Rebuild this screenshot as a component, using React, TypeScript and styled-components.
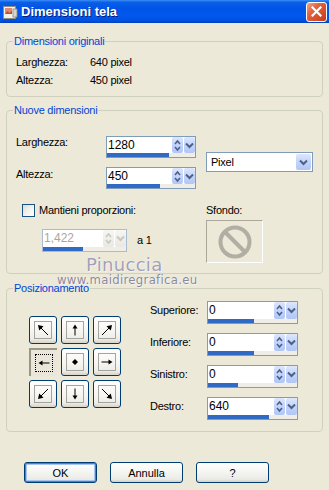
import styled, { createGlobalStyle } from "styled-components";

const GlobalStyle = createGlobalStyle`
  html, body { margin: 0; padding: 0; background: #ECE9D8; }
  body { font-family: "Liberation Sans", Arial, sans-serif; font-size: 11px; color: #000; }
  * { box-sizing: border-box; }
`;

const Window = styled.div`
  position: relative;
  width: 329px;
  height: 490px;
  overflow: hidden;
  background: #ECE9D8;
  letter-spacing: -0.25px;
`;

const TitleBar = styled.div`
  height: 23px;
  display: flex;
  align-items: center;
  padding: 0 2px;
  background: linear-gradient(180deg, #3C8DF7 0%, #0A5FE6 10%, #0155E6 35%, #0058EE 70%, #0050DC 90%, #0041BE 100%);
`;

const Title = styled.div`
  margin-left: 3px;
  color: #fff;
  font-weight: bold;
  font-size: 13px;
  letter-spacing: 0;
  text-shadow: 1px 1px 0 #0A1E7D;
`;

const CloseBtn = styled.div`
  margin-left: auto;
  width: 21px;
  height: 20px;
  border: 1px solid #fff;
  border-radius: 3px;
  background: linear-gradient(135deg, #F0A88E 0%, #E2643F 35%, #D44A23 75%, #C23A16 100%);
  display: flex;
  align-items: center;
  justify-content: center;
`;

const Body = styled.div`
  padding: 12px 6px 0;
`;

const Group = styled.fieldset<{ $pad: string; $gap?: number }>`
  margin: ${(p) => p.$gap ?? 0}px 0 0;
  padding: ${(p) => p.$pad};
  border: 1px solid #D0D0BF;
  border-radius: 4px;
  min-width: 0;
`;

const Legend = styled.legend`
  margin-left: -3px;
  padding: 0 1px;
  color: #0046D5;
  line-height: 13px;
`;

const InfoGrid = styled.div`
  display: grid;
  grid-template-columns: 74px auto;
  grid-auto-rows: 18px;
  align-items: center;
`;

const Label = styled.div<{ $w?: number; $top?: number }>`
  width: ${(p) => (p.$w ? `${p.$w}px` : "auto")};
  padding-top: ${(p) => p.$top ?? 0}px;
  line-height: 13px;
  flex-shrink: 0;
`;

const Upper = styled.div`
  display: flex;
`;

const SizeRows = styled.div`
  display: flex;
  flex-direction: column;
  gap: 9px;
`;

const Row = styled.div`
  display: flex;
  align-items: flex-start;
`;

const SpinBox = styled.div<{ $w: number; $h: number; $off?: boolean }>`
  width: ${(p) => p.$w}px;
  height: ${(p) => p.$h}px;
  border: 1px solid ${(p) => (p.$off ? "#A9BAD2" : "#7F9DB9")};
  background: #fff;
  display: flex;
  flex-direction: column;
  flex-shrink: 0;
`;

const SpinTop = styled.div`
  flex: 1;
  display: flex;
  min-height: 0;
`;

const SpinValue = styled.div<{ $off?: boolean }>`
  flex: 1;
  padding-left: 1px;
  font-size: 12px;
  letter-spacing: 0;
  line-height: 16px;
  color: ${(p) => (p.$off ? "#ACA899" : "#000")};
`;

const SpinBtn = styled.div<{ $off?: boolean }>`
  width: 11px;
  margin-left: 1px;
  border-radius: 2px;
  background: ${(p) =>
    p.$off ? "linear-gradient(180deg, #F6F6F2, #E9E8E2)" : "linear-gradient(180deg, #DCE6FD 0%, #C3D4FB 50%, #B1C6F6 100%)"};
  display: flex;
  align-items: center;
  justify-content: center;
`;

const SpinTrack = styled.div`
  height: 4px;
  background: #EFEDE5;
`;

const SpinFill = styled.div<{ $fill: number }>`
  width: ${(p) => p.$fill}px;
  height: 100%;
  background: #316AC5;
`;

const Select = styled.div`
  align-self: center;
  margin: 0 0 1px 10px;
  width: 107px;
  height: 20px;
  border: 1px solid #7F9DB9;
  background: #fff;
  display: flex;
  padding: 1px;
`;

const SelectText = styled.div`
  flex: 1;
  padding-left: 3px;
  line-height: 16px;
`;

const SelectBtn = styled.div`
  width: 15px;
  border-radius: 2px;
  background: linear-gradient(180deg, #DCE6FD 0%, #C3D4FB 50%, #B1C6F6 100%);
  display: flex;
  align-items: center;
  justify-content: center;
`;

const Lower = styled.div`
  display: flex;
  margin-top: 15px;
`;

const LeftCol = styled.div`
  width: 190px;
  display: flex;
  flex-direction: column;
`;

const CheckRow = styled.div`
  display: flex;
  align-items: center;
  gap: 4px;
  margin-left: 6px;
  line-height: 13px;
`;

const Check = styled.div`
  width: 13px;
  height: 13px;
  border: 1px solid #1C5180;
  background: linear-gradient(135deg, #DCDCD7 0%, #F5F5F2 60%, #FFFFFF 100%);
`;

const RatioRow = styled.div`
  display: flex;
  align-items: center;
  gap: 10px;
  margin: 12px 0 0 26px;
  line-height: 13px;
`;

const RightCol = styled.div`
  display: flex;
  flex-direction: column;
  gap: 3px;
`;

const Swatch = styled.div`
  width: 57px;
  height: 43px;
  border: 1px solid;
  border-color: #ACA899 #FFFFFF #FFFFFF #ACA899;
  display: flex;
  align-items: center;
  justify-content: center;
`;

const PosBody = styled.div`
  display: flex;
  align-items: flex-start;
`;

const PadGrid = styled.div`
  display: grid;
  grid-template-columns: repeat(3, 28px);
  grid-auto-rows: 28px;
  gap: 4px;
  margin: 15px 0 0 13px;
`;

const PadBtn = styled.div<{ $pressed?: boolean }>`
  display: flex;
  align-items: center;
  justify-content: center;
  ${(p) =>
    p.$pressed
      ? `
    border-top: 2px solid #9A9788;
    border-left: 2px solid #9A9788;
    background: #EAE7DA;
  `
      : `
    border: 1px solid #003C74;
    border-radius: 3px;
    background: linear-gradient(180deg, #FFFFFF 0%, #F6F5F1 55%, #ECEBE5 85%, #D8D3C8 100%);
  `}
`;

const PadFrame = styled.div<{ $pressed?: boolean }>`
  width: 18px;
  height: 18px;
  border: 1px ${(p) => (p.$pressed ? "dotted #000" : "solid #A3A3A0")};
  display: flex;
  align-items: center;
  justify-content: center;
`;

const MarginCol = styled.div`
  margin-left: 29px;
  display: flex;
  flex-direction: column;
  gap: 9px;
`;

const Buttons = styled.div`
  display: flex;
  gap: 13px;
  margin-top: 30px;
  padding-left: 18px;
`;

const Button = styled.div<{ $default?: boolean }>`
  width: 73px;
  height: 21px;
  border: 1px solid #003C74;
  border-radius: 3px;
  background: linear-gradient(180deg, #FFFFFF 0%, #F4F4F0 50%, #ECEBE6 85%, #D6D0C5 100%);
  box-shadow: ${(p) => (p.$default ? "inset 0 0 0 1px #4F7FCB, inset 0 0 0 2px #A9C5F2" : "none")};
  display: flex;
  align-items: center;
  justify-content: center;
  letter-spacing: 0;
`;

const Watermark = styled.div<{ $top: number; $left: number; $size: number; $color: string }>`
  position: absolute;
  top: ${(p) => p.$top}px;
  left: ${(p) => p.$left}px;
  font-family: "DejaVu Sans", sans-serif;
  font-size: ${(p) => p.$size}px;
  line-height: 1;
  letter-spacing: 0.3px;
  color: ${(p) => p.$color};
  text-shadow: 0 0 1px #fff, 1px 1px 0 #F4F2EA;
  pointer-events: none;
`;

const UpDown = ({ off }: { off?: boolean }) => (
  <svg width="7" height="13" viewBox="0 0 7 13">
    <path d="M1 5 L3.5 2 L6 5 M1 8 L3.5 11 L6 8" fill="none" stroke={off ? "#C9C8BF" : "#4D6185"} strokeWidth="1.6" />
  </svg>
);

const Chevron = ({ off }: { off?: boolean }) => (
  <svg width="9" height="7" viewBox="0 0 9 7">
    <path d="M1 1.5 L4.5 5 L8 1.5" fill="none" stroke={off ? "#C9C8BF" : "#4D6185"} strokeWidth="2" />
  </svg>
);

type SpinProps = { value: string; fill: number; w: number; h?: number; off?: boolean };

const Spin = ({ value, fill, w, h = 22, off }: SpinProps) => (
  <SpinBox $w={w} $h={h} $off={off}>
    <SpinTop>
      <SpinValue $off={off}>{value}</SpinValue>
      <SpinBtn $off={off}>
        <UpDown off={off} />
      </SpinBtn>
      <SpinBtn $off={off}>
        <Chevron off={off} />
      </SpinBtn>
    </SpinTop>
    <SpinTrack>
      <SpinFill $fill={fill} />
    </SpinTrack>
  </SpinBox>
);

const pads = [
  { d: true, r: 0 },
  { d: false, r: 0 },
  { d: true, r: 90 },
  { d: false, r: 270 },
  { c: true, r: 0 },
  { d: false, r: 90 },
  { d: true, r: 270 },
  { d: false, r: 180 },
  { d: true, r: 180 },
];

const Arrow = ({ d, r, c }: { d?: boolean; r: number; c?: boolean }) => (
  <svg width="14" height="14" viewBox="0 0 14 14">
    {c ? (
      <path d="M7 4 L10 7 L7 10 L4 7 Z" fill="#000" />
    ) : (
      <g transform={`rotate(${r} 7 7)`}>
        {d ? (
          <>
            <path d="M12 12 L3.5 3.5" stroke="#000" strokeWidth="1" />
            <path d="M2 2 L7.5 3.2 L3.2 7.5 Z" fill="#000" />
          </>
        ) : (
          <>
            <path d="M7 12.5 L7 4" stroke="#000" strokeWidth="1" />
            <path d="M7 1.5 L4.5 5.5 L9.5 5.5 Z" fill="#000" />
          </>
        )}
      </g>
    )}
  </svg>
);

const margins = [
  { label: "Superiore:", value: "0", fill: 46 },
  { label: "Inferiore:", value: "0", fill: 46 },
  { label: "Sinistro:", value: "0", fill: 30 },
  { label: "Destro:", value: "640", fill: 61 },
];

export default function App() {
  return (
    <Window>
      <GlobalStyle />
      <TitleBar>
        <svg width="16" height="16" viewBox="0 0 16 16">
          <rect x="1.5" y="2.5" width="12" height="12" fill="#F4F1E8" stroke="#8E8C84" />
          <rect x="3" y="4" width="7" height="6" fill="#E6896A" />
          <path d="M3 10 L5.5 7 L7.5 9 L10 6.5 L10 10 Z" fill="#B2543A" />
          <rect x="11" y="5" width="4" height="8" fill="#D9D6CC" stroke="#8E8C84" strokeWidth="0.8" />
        </svg>
        <Title>Dimensioni tela</Title>
        <CloseBtn>
          <svg width="11" height="11" viewBox="0 0 11 11">
            <path d="M1.5 1.5 L9.5 9.5 M9.5 1.5 L1.5 9.5" stroke="#fff" strokeWidth="2.2" strokeLinecap="square" />
          </svg>
        </CloseBtn>
      </TitleBar>

      <Body>
        <Group $pad="5px 9px 7px">
          <Legend>Dimensioni originali</Legend>
          <InfoGrid>
            <span>Larghezza:</span>
            <span>640 pixel</span>
            <span>Altezza:</span>
            <span>450 pixel</span>
          </InfoGrid>
        </Group>

        <Group $pad="19px 9px 10px" $gap={7}>
          <Legend>Nuove dimensioni</Legend>
          <Upper>
            <SizeRows>
              <Row>
                <Label $w={90}>Larghezza:</Label>
                <Spin value="1280" fill={62} w={90} />
              </Row>
              <Row>
                <Label $w={90} $top={1}>Altezza:</Label>
                <Spin value="450" fill={53} w={90} />
              </Row>
            </SizeRows>
            <Select>
              <SelectText>Pixel</SelectText>
              <SelectBtn>
                <Chevron />
              </SelectBtn>
            </Select>
          </Upper>
          <Lower>
            <LeftCol>
              <CheckRow>
                <Check />
                <span>Mantieni proporzioni:</span>
              </CheckRow>
              <RatioRow>
                <Spin value="1,422" fill={40} w={85} h={23} off />
                <span>a 1</span>
              </RatioRow>
            </LeftCol>
            <RightCol>
              <Label>Sfondo:</Label>
              <Swatch>
                <svg width="36" height="36" viewBox="0 0 36 36">
                  <circle cx="18" cy="18" r="14.5" fill="none" stroke="#B1AFA4" strokeWidth="4" />
                  <path d="M8 8 L28 28" stroke="#B1AFA4" strokeWidth="4" />
                </svg>
              </Swatch>
            </RightCol>
          </Lower>
        </Group>

        <Group $pad="6px 9px 11px" $gap={8}>
          <Legend>Posizionamento</Legend>
          <PosBody>
            <PadGrid>
              {pads.map((p, i) => (
                <PadBtn key={i} $pressed={i === 3}>
                  <PadFrame $pressed={i === 3}>
                    <Arrow d={p.d} r={p.r} c={p.c} />
                  </PadFrame>
                </PadBtn>
              ))}
            </PadGrid>
            <MarginCol>
              {margins.map((m) => (
                <Row key={m.label}>
                  <Label $w={57} $top={3}>{m.label}</Label>
                  <Spin value={m.value} fill={m.fill} w={91} h={23} />
                </Row>
              ))}
            </MarginCol>
          </PosBody>
        </Group>

        <Buttons>
          <Button $default>OK</Button>
          <Button>Annulla</Button>
          <Button>?</Button>
        </Buttons>
      </Body>

      <Watermark $top={256} $left={86} $size={18} $color="#A3A0B8">Pinuccia</Watermark>
      <Watermark $top={275} $left={57} $size={11.7} $color="#8A8898">www.maidiregrafica.eu</Watermark>
    </Window>
  );
}
